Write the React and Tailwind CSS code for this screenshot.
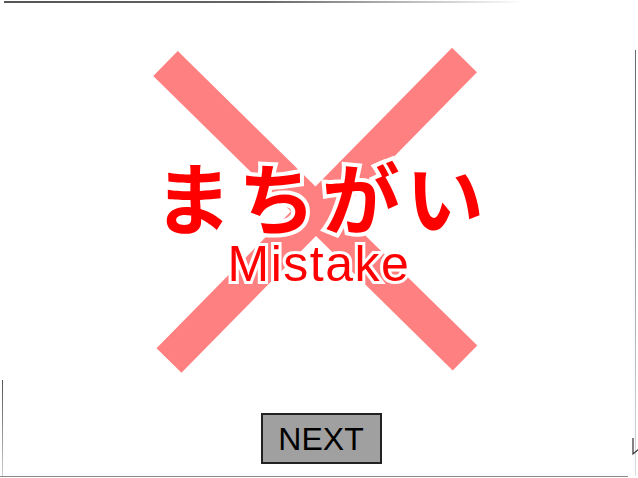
import React from "react";

function Cross() {
  return (
    <svg className="absolute inset-0" width="638" height="478" viewBox="0 0 638 478">
      <line x1="165.5" y1="63.5" x2="465" y2="358" stroke="#ff8080" strokeWidth="35" />
      <line x1="464.5" y1="60" x2="169" y2="360.5" stroke="#ff8080" strokeWidth="35" />
    </svg>
  );
}

export default function App() {
  return (
    <div className="relative w-[638px] h-[478px] bg-white overflow-hidden">
      {/* window edges from the capture */}
      <div className="absolute left-[4px] top-[1px] w-[520px] h-[2px] bg-gradient-to-r from-[#555] via-[#666] to-transparent" />
      <div className="absolute left-[2px] top-[380px] w-[1px] h-[96px] bg-gradient-to-b from-[#555] to-[#ccc]" />
      <div className="absolute right-[2px] top-[50px] w-[1px] h-[426px] bg-gradient-to-b from-[#666] to-[#ddd]" />
      <div className="absolute left-0 bottom-[1px] w-[628px] h-[1px] bg-[#888]" />
      <svg className="absolute left-[632px] top-[437px]" width="8" height="20" viewBox="0 0 8 20">
        <path d="M1 1 L1 17 L7 12" fill="none" stroke="#333" strokeWidth="1.2" />
      </svg>

      <Cross />

      <div className="relative flex flex-col items-center pt-[156px]">
        <div className="text-[78px] leading-none font-semibold text-[#ff0000] tracking-[6px] pl-[6px] font-['Noto_Sans_CJK_JP',sans-serif] [-webkit-text-stroke:8px_white] [paint-order:stroke_fill]">
          まちがい
        </div>
        <div className="mt-[5px] text-[50px] leading-none text-[#ff0000] tracking-[1.5px] font-['Liberation_Sans',Arial,sans-serif] [-webkit-text-stroke:6px_white] [paint-order:stroke_fill]">
          Mistake
        </div>
        <div className="mt-[124px] ml-[4px] w-[121px] h-[51px] border-2 border-[#222] bg-[#a0a0a0] flex items-center justify-center">
          <span className="text-[32px] leading-none text-black font-['Liberation_Sans',Arial,sans-serif]">NEXT</span>
        </div>
      </div>
    </div>
  );
}
